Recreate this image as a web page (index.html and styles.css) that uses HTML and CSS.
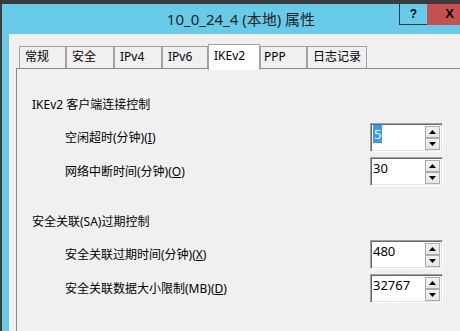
FILE: index.html
```html
<!DOCTYPE html>
<html lang="zh-CN">

<head>
    <meta charset="UTF-8">
    <title>10_0_24_4 (本地) 属性</title>
    <link rel="stylesheet" href="styles.css">
</head>

<body>

    <div class="window">
        <!-- Caption -->
        <div class="titlebar">
            <div class="title">10_0_24_4 (本地) 属性</div>
            <div class="caption-btn help-btn">?</div>
            <div class="caption-btn close-btn">X</div>
        </div>

        <div class="client">
            <div class="tabcontrol">
                <div class="tabs">
                    <div class="tab tab-general">常规</div>
                    <div class="tab tab-security">安全</div>
                    <div class="tab tab-ipv4">IPv4</div>
                    <div class="tab tab-ipv6">IPv6</div>
                    <div class="tab tab-ikev2 active">IKEv2</div>
                    <div class="tab tab-ppp">PPP</div>
                    <div class="tab tab-log">日志记录</div>
                </div>

                <div class="panel">
                    <!-- IKEv2 client -->
                    <div class="group">
                        <div class="group-title">IKEv2 客户端连接控制</div>
                        <div class="row">
                            <label class="row-label">空闲超时(分钟)(<u>I</u>)</label>
                            <div class="spin">
                                <div class="spin-value"><span class="selected">5</span></div>
                                <div class="spin-buttons">
                                    <div class="spin-btn"><svg width="7" height="4" viewBox="0 0 7 4"><polygon points="3.5,0 7,4 0,4" /></svg></div>
                                    <div class="spin-btn"><svg width="7" height="4" viewBox="0 0 7 4"><polygon points="0,0 7,0 3.5,4" /></svg></div>
                                </div>
                            </div>
                        </div>
                        <div class="row">
                            <label class="row-label">网络中断时间(分钟)(<u>O</u>)</label>
                            <div class="spin">
                                <div class="spin-value">30</div>
                                <div class="spin-buttons">
                                    <div class="spin-btn"><svg width="7" height="4" viewBox="0 0 7 4"><polygon points="3.5,0 7,4 0,4" /></svg></div>
                                    <div class="spin-btn"><svg width="7" height="4" viewBox="0 0 7 4"><polygon points="0,0 7,0 3.5,4" /></svg></div>
                                </div>
                            </div>
                        </div>
                    </div>

                    <!-- SA expiry -->
                    <div class="group">
                        <div class="group-title">安全关联(SA)过期控制</div>
                        <div class="row">
                            <label class="row-label">安全关联过期时间(分钟)(<u>X</u>)</label>
                            <div class="spin">
                                <div class="spin-value">480</div>
                                <div class="spin-buttons">
                                    <div class="spin-btn"><svg width="7" height="4" viewBox="0 0 7 4"><polygon points="3.5,0 7,4 0,4" /></svg></div>
                                    <div class="spin-btn"><svg width="7" height="4" viewBox="0 0 7 4"><polygon points="0,0 7,0 3.5,4" /></svg></div>
                                </div>
                            </div>
                        </div>
                        <div class="row">
                            <label class="row-label">安全关联数据大小限制(MB)(<u>D</u>)</label>
                            <div class="spin">
                                <div class="spin-value">32767</div>
                                <div class="spin-buttons">
                                    <div class="spin-btn"><svg width="7" height="4" viewBox="0 0 7 4"><polygon points="3.5,0 7,4 0,4" /></svg></div>
                                    <div class="spin-btn"><svg width="7" height="4" viewBox="0 0 7 4"><polygon points="0,0 7,0 3.5,4" /></svg></div>
                                </div>
                            </div>
                        </div>
                    </div>
                </div>
            </div>
        </div>
    </div>

</body>

</html>
```

FILE: styles.css
```css
html,
body {
    margin: 0;
    height: 100%;
    overflow: hidden;
}

body {
    background-color: #3c3c3c;
    font-family: "Noto Sans", "Noto Sans CJK SC", sans-serif;
    font-size: 12px;
    color: #000;
}

.window {
    margin: 4px 0 0 2px;
    width: 472px;
    height: 327px;
    background-color: #68cce9;
    display: flex;
    flex-direction: column;
}

.titlebar {
    height: 30px;
    display: flex;
    align-items: flex-start;
    flex-shrink: 0;
}

.title {
    flex: 1;
    padding-left: 81px;
    text-align: center;
    font-size: 15px;
    line-height: 31px;
    color: #1e1e1e;
}

.caption-btn {
    height: 21px;
    box-sizing: border-box;
    text-align: center;
    font-family: "Liberation Sans", sans-serif;
    font-weight: bold;
    font-size: 12px;
    line-height: 20px;
}

.help-btn {
    width: 28px;
    border-left: 1px solid #2b3a40;
    border-bottom: 1px solid #2b3a40;
}

.close-btn {
    width: 47px;
    background-color: #c75050;
    font-size: 13px;
    padding-right: 2px;
}

.client {
    flex: 1;
    min-height: 0;
    margin: 0 7px;
    background-color: #f0f0f0;
    padding: 10px 0 0 7px;
    display: flex;
    flex-direction: column;
}

.tabcontrol {
    flex: 1;
    display: flex;
    flex-direction: column;
}

.tabs {
    display: flex;
    align-items: flex-end;
    height: 24px;
    padding-left: 3px;
}

.tab {
    box-sizing: border-box;
    height: 22px;
    border: 1px solid #a2a2a2;
    border-bottom: none;
    padding-left: 5px;
    line-height: 20px;
    background-color: #f0f0f0;
}

.tab.active {
    position: relative;
    z-index: 1;
    height: 26px;
    margin-bottom: -2px;
    background-color: #fff;
    line-height: 22px;
}

.tab-general { width: 47px; }
.tab-security { width: 48px; }
.tab-ipv4 { width: 48px; }
.tab-ipv6 { width: 46px; }
.tab-ikev2 { width: 52px; }
.tab-ppp { width: 47px; padding-left: 3px; }
.tab-log { width: 60px; }

.panel {
    flex: 1;
    border-top: 1px solid #8c8c8c;
    border-left: 1px solid #8c8c8c;
    background-color: #f0f0f0;
    padding: 28px 0 0 15px;
}

.group + .group {
    margin-top: 28px;
}

.group-title {
    line-height: 16px;
    margin-bottom: 10px;
}

.row {
    display: flex;
    align-items: center;
    padding-left: 33px;
}

.row + .row {
    margin-top: 5px;
}

.row-label {
    width: 305px;
    line-height: 16px;
}

.spin {
    box-sizing: border-box;
    width: 73px;
    height: 29px;
    display: flex;
    background-color: #fff;
    border: 1px solid;
    border-color: #a0a0a0 #fff #fff #a0a0a0;
    box-shadow: inset 1px 1px 0 #696969, inset -1px -1px 0 #e3e3e3;
}

.spin-value {
    flex: 1;
    padding: 2px 0 0 2px;
    font-size: 13px;
    line-height: 16px;
}

.selected {
    background-color: #3399ff;
    color: #fff;
    padding: 0 1px;
}

.spin-buttons {
    display: flex;
    flex-direction: column;
    width: 15px;
    padding: 2px 2px 1px 0;
}

.spin-btn {
    box-sizing: border-box;
    height: 12px;
    border: 1px solid #acacac;
    background: linear-gradient(#f2f2f2, #e6e6e6);
    display: flex;
    align-items: center;
    justify-content: center;
}

.spin-btn svg {
    display: block;
    fill: #000;
}
```
